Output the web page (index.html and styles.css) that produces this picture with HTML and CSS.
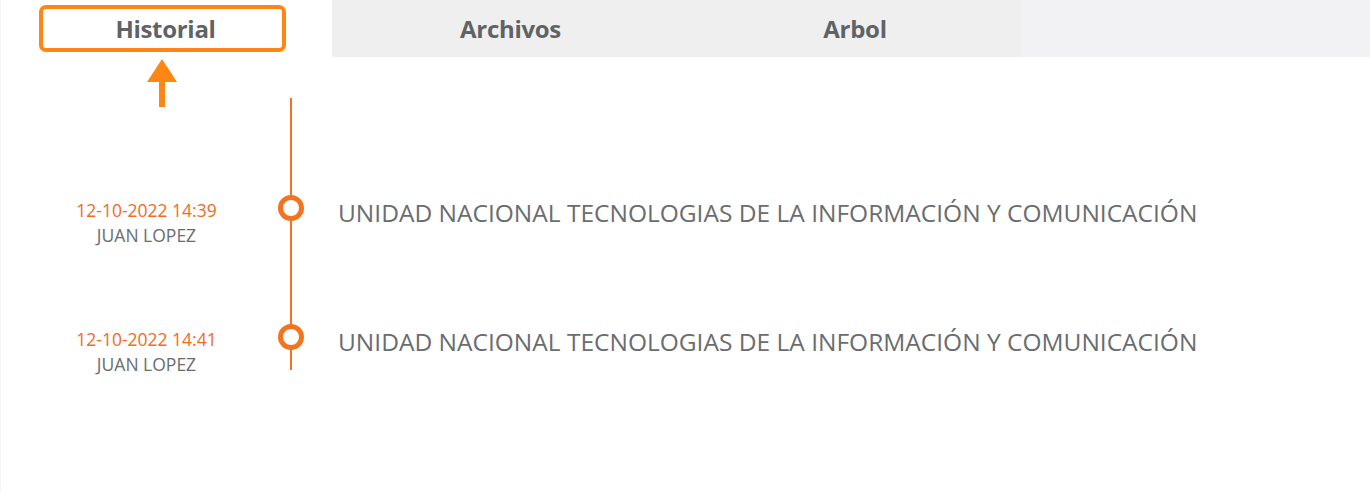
FILE: index.html
```html
<!DOCTYPE html>
<html lang="es">
<head>
<meta charset="utf-8">
<title>Historial</title>
<link rel="stylesheet" href="styles.css">
</head>
<body>
<div class="page">
  <nav class="tabs">
    <div class="tab tab-first">
      <div class="tab-box">Historial</div>
    </div>
    <div class="tab tab-gray">Archivos</div>
    <div class="tab tab-gray">Arbol</div>
    <div class="tab tab-rest"></div>
  </nav>
  <svg class="pointer" width="30" height="48" viewBox="0 0 30 48" aria-hidden="true">
    <polygon points="15,0 30,23 0,23" fill="#ff8614"/>
    <rect x="12" y="22" width="6" height="26" fill="#ff8614"/>
  </svg>
  <section class="timeline">
    <div class="entry">
      <div class="meta">
        <div class="date">12-10-2022 14:39</div>
        <div class="user">JUAN LOPEZ</div>
      </div>
      <div class="node"><span class="dot"></span></div>
      <div class="desc">UNIDAD NACIONAL TECNOLOGIAS DE LA INFORMACIÓN Y COMUNICACIÓN</div>
    </div>
    <div class="entry">
      <div class="meta">
        <div class="date">12-10-2022 14:41</div>
        <div class="user">JUAN LOPEZ</div>
      </div>
      <div class="node"><span class="dot"></span></div>
      <div class="desc">UNIDAD NACIONAL TECNOLOGIAS DE LA INFORMACIÓN Y COMUNICACIÓN</div>
    </div>
  </section>
</div>
</body>
</html>
```
FILE: styles.css
```css
* { box-sizing: border-box; }
html, body { margin: 0; padding: 0; background: #ffffff; }
body { font-family: "Open Sans", "Noto Sans", sans-serif; }

.page {
  position: relative;
  width: 1370px;
  height: 493px;
  background: #ffffff;
  border-left: 1px solid #f6f6f6;
}

.tabs {
  display: grid;
  grid-template-columns: 331px 345px 344px 1fr;
  height: 57px;
}

.tab {
  display: flex;
  align-items: center;
  justify-content: center;
  font-size: 24px;
  font-weight: 700;
  color: #606366;
  letter-spacing: -0.3px;
}

.tab-first { justify-content: flex-start; padding-left: 38px; }

.tab-box {
  width: 247px;
  height: 47px;
  border: 4px solid #ff8614;
  border-radius: 7px;
  display: flex;
  align-items: center;
  justify-content: center;
  padding-left: 6px;
}

.tab-gray { background: #efefef; padding-left: 12px; }
.tab-rest { background: #f2f2f4; }

.pointer {
  position: absolute;
  left: 146px;
  top: 59px;
}

.timeline {
  position: relative;
  margin-top: 41px;
  padding-top: 97px;
  display: flex;
  flex-direction: column;
  gap: 75px;
}

.timeline::before {
  content: "";
  position: absolute;
  left: 289px;
  top: 0;
  width: 2px;
  height: 272px;
  background: #f47321;
}

.entry {
  display: grid;
  grid-template-columns: 277px 26px 1fr;
  align-items: start;
  height: 54px;
}

.meta {
  padding-left: 14px;
  text-align: center;
  padding-top: 3px;
}

.date {
  font-size: 17.5px;
  line-height: 25px;
  color: #f36a24;
}

.user {
  font-size: 17.5px;
  line-height: 25px;
  color: #6a6d70;
}

.node { position: relative; height: 26px; }

.dot {
  display: block;
  position: relative;
  width: 26px;
  height: 26px;
  border: 5px solid #f47321;
  border-radius: 50%;
  background: #ffffff;
}

.desc {
  padding-left: 34px;
  padding-top: 4px;
  font-size: 24.5px;
  line-height: 28px;
  color: #6a6d70;
  white-space: nowrap;
}
```
